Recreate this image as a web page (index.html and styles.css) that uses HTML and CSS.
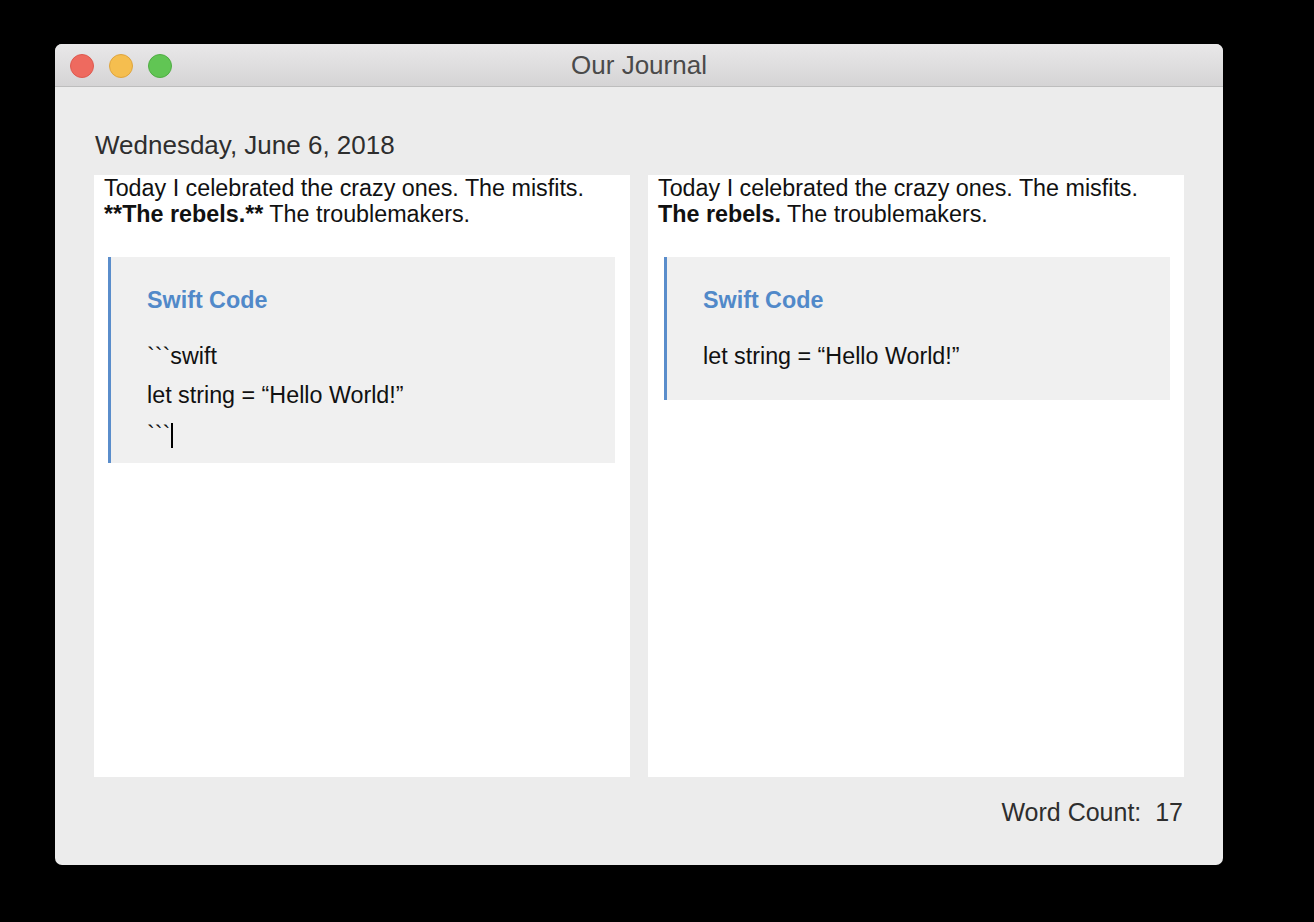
FILE: index.html
```html
<!DOCTYPE html>
<html>
<head>
<meta charset="utf-8">
<link rel="stylesheet" href="styles.css">
</head>
<body>
<div class="window">
  <div class="titlebar">
    <div class="lights">
      <span class="light red"></span>
      <span class="light yellow"></span>
      <span class="light green"></span>
    </div>
    <div class="title">Our Journal</div>
  </div>
  <div class="content">
    <div class="date">Wednesday, June 6, 2018</div>
    <div class="panes">
      <div class="pane">
        <p class="text">Today I celebrated the crazy ones. The misfits.<br><b>**The rebels.**</b> The troublemakers.</p>
        <div class="quote quote-edit">
          <p class="qtitle">Swift Code</p>
          <p class="code">```swift</p>
          <p class="code">let string = “Hello World!”</p>
          <p class="code">```<span class="caret"></span></p>
        </div>
      </div>
      <div class="pane">
        <p class="text">Today I celebrated the crazy ones. The misfits.<br><b>The rebels.</b> The troublemakers.</p>
        <div class="quote quote-render">
          <p class="qtitle">Swift Code</p>
          <p class="code">let string = “Hello World!”</p>
        </div>
      </div>
    </div>
    <div class="footer">Word Count:&nbsp; 17</div>
  </div>
</div>
</body>
</html>
```

FILE: styles.css
```css
html, body {
  margin: 0;
  padding: 0;
  background: #000;
  width: 1314px;
  height: 922px;
  overflow: hidden;
}

.window {
  margin: 44px 0 0 55px;
  width: 1168px;
  height: 821px;
  border-radius: 7px;
  overflow: hidden;
  background: #ececec;
  display: flex;
  flex-direction: column;
}

.titlebar {
  height: 42px;
  flex: none;
  background: linear-gradient(#e9e8e9, #d5d4d5);
  border-bottom: 1px solid #bdbdbd;
  position: relative;
  display: flex;
  align-items: center;
  justify-content: center;
}

.lights {
  position: absolute;
  left: 15px;
  top: 10px;
  display: flex;
  gap: 15px;
}

.light {
  width: 22px;
  height: 22px;
  border-radius: 50%;
  border: 1px solid rgba(0,0,0,0.08);
}
.red { background: #ee6a5f; border-color: #de5a50; }
.yellow { background: #f5be4f; border-color: #dfa53e; }
.green { background: #61c554; border-color: #50ad44; }

.title {
  font-family: "Liberation Sans", Arial, sans-serif;
  font-size: 26px;
  color: #4a4a4a;
  padding-top: 1px;
}

.content {
  flex: 1;
  padding: 45px 39px 0 39px;
  display: flex;
  flex-direction: column;
}

.date {
  font-family: "Liberation Sans", Arial, sans-serif;
  font-size: 26px;
  line-height: 26px;
  color: #2e2e2e;
  height: 26px;
  padding-left: 1px;
}

.panes {
  margin-top: 17px;
  height: 602px;
  display: flex;
  gap: 18px;
}

.pane {
  flex: 1;
  background: #fff;
  font-family: "Liberation Sans", Arial, sans-serif;
  font-size: 23.3px;
  color: #111;
}

.text {
  margin: 0;
  padding: 0 10px;
  line-height: 26px;
}

.text b {
  font-weight: bold;
}

.quote {
  margin: 30px 15px 0 14px;
  background: #f0f0f0;
  border-left: 3px solid #5a8dcb;
  padding: 30px 20px 0 36px;
}

.quote-edit { padding-bottom: 9px; }
.quote-render { padding-bottom: 24px; margin-left: 16px; margin-right: 14px; }

.qtitle {
  margin: 0;
  font-weight: bold;
  color: #5189c9;
  line-height: 26px;
}

.code {
  margin: 0;
  line-height: 39px;
}

.qtitle + .code {
  margin-top: 24px;
}

.caret {
  display: inline-block;
  width: 2px;
  height: 25px;
  background: #000;
  vertical-align: -6px;
  margin-left: 1px;
}

.footer {
  margin-top: 22px;
  text-align: right;
  font-family: "Liberation Sans", Arial, sans-serif;
  font-size: 25px;
  line-height: 26px;
  color: #2e2e2e;
  padding-right: 1px;
}
```
